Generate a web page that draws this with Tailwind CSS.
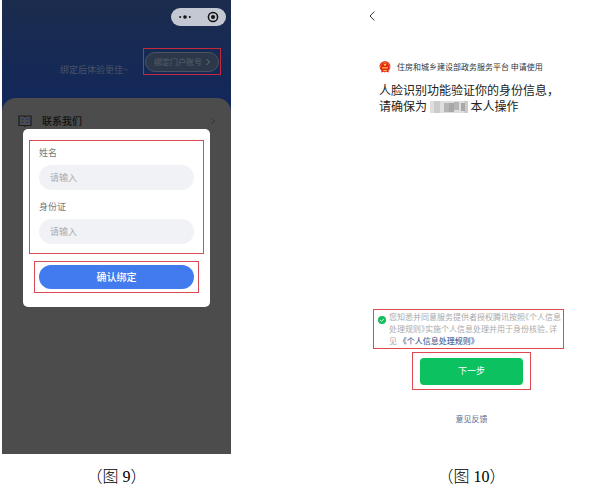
<!DOCTYPE html>
<html lang="zh-CN">
<head>
  <meta charset="UTF-8">
  <meta name="viewport" content="width=device-width, initial-scale=1.0">
  <title>身份绑定与人脸识别</title>
  <script src="https://cdn.jsdelivr.net/npm/@tailwindcss/browser@4"></script>
</head>
<body class="bg-white font-['Noto_Sans_CJK_SC',sans-serif]">
  <main class="grid grid-cols-2 gap-[126px] pl-0.5 pr-[29px]">

    <!-- Bind account -->
    <figure>
      <div class="relative h-[454px] bg-linear-to-b from-[#1b2c4d] to-[#12275c] to-25% flex flex-col">
        <header class="h-[98px] pt-2 flex flex-col">
          <div class="flex justify-end pr-[5px]">
            <div class="w-[55px] h-[18px] rounded-full bg-[#c3c8d3] flex items-center justify-between pl-2 pr-[7px]">
              <svg class="w-3 h-3" viewBox="0 0 12 12" fill="#111">
                <circle cx="1.2" cy="6" r="1"/><circle cx="6" cy="6" r="1.8"/><circle cx="10.8" cy="6" r="1"/>
              </svg>
              <svg class="w-3 h-3" viewBox="0 0 12 12">
                <circle cx="6" cy="6" r="4.6" fill="none" stroke="#111" stroke-width="1.5"/><circle cx="6" cy="6" r="2" fill="#111"/>
              </svg>
            </div>
          </div>
          <div class="mt-[22px] flex justify-between items-start pl-[58px] pr-[10px]">
            <p class="mt-4 text-[9px] leading-3 text-[#4b5364]">绑定后体验更佳~</p>
            <div class="border border-[#c5283d] w-[78px] h-[27px] px-px flex items-center">
              <button type="button" class="w-full h-5 rounded-full border border-[#4a5466] bg-[#2c3849] text-[8px] text-[#59606b] flex items-center justify-center gap-1">
                绑定门户账号
                <svg class="w-1 h-2" viewBox="0 0 4 8" fill="none" stroke="#6a707b"><path d="M.5 1 3.5 4 .5 7"/></svg>
              </button>
            </div>
          </div>
        </header>
        <section class="flex-1 rounded-t-[14px] bg-[#4c4c4c] px-4 pt-4">
          <a href="#" class="flex items-center text-[10px] leading-[14px] font-medium text-[#111]">
            <svg class="w-[14px] h-3 mr-[10px]" viewBox="0 0 14 12" fill="none">
              <path d="M1 1h5l1 .8L8 1h5v9.500H8l-1 .8-1-.8H1z" stroke="#1c1c22" stroke-width="1.2"/>
              <path d="M3 4.200h3M8 4.200h3M3 7.400h3M8 7.400h3" stroke="#26386f" stroke-width="1.3"/>
            </svg>
            联系我们
            <svg class="w-1 h-2 ml-auto" viewBox="0 0 4 8" fill="none" stroke="#333"><path d="M.5 1 3.5 4 .5 7"/></svg>
          </a>
        </section>

        <!-- Dialog -->
        <form class="absolute inset-x-[21px] top-[129px] rounded-[5px] bg-white pt-[11px] pb-[14px] text-[9px] leading-3">
          <div class="border border-[#d94a52] mx-[6px] h-[114px] px-[9px] pt-[6px]">
            <label for="name" class="block text-[#777]">姓名</label>
            <input id="name" type="text" placeholder="请输入" class="block mt-[6px] w-full h-[25px] rounded-full bg-[#f1f2f6] px-[11px] placeholder:text-[#aaabaf]">
            <label for="id-card" class="block mt-[11px] text-[#777]">身份证</label>
            <input id="id-card" type="text" placeholder="请输入" class="block mt-[6px] w-full h-[25px] rounded-full bg-[#f1f2f6] px-[11px] placeholder:text-[#aaabaf]">
          </div>
          <div class="border border-[#d94a52] mx-[11px] mt-[7px] h-8 px-1 flex items-center">
            <button type="submit" class="w-full h-6 rounded-full bg-[#417bee] text-[10px] font-medium text-white">确认绑定</button>
          </div>
        </form>
      </div>
      <figcaption class="pt-[11px] text-center text-[16px] leading-6 font-light text-black font-['Liberation_Serif','Noto_Sans_CJK_SC',serif]">（图 9）</figcaption>
    </figure>

    <!-- Face verification -->
    <figure>
      <div class="h-[454px] pt-[11px] px-[11px] flex flex-col">
        <a href="#" aria-label="返回">
          <svg class="w-[6px] h-[10px] ml-px" viewBox="0 0 6 10" fill="none" stroke="#333"><path d="M5.3.6 1 5l4.3 4.4"/></svg>
        </a>
        <div class="mt-10 ml-[11px] flex items-center gap-[6px] text-[8px] leading-3 text-[#333]">
          <svg class="w-3 h-3" viewBox="0 0 12 12">
            <path d="M6 .3C9 .3 11.400 2.500 11.400 5.500 11.400 7.300 10.700 8.700 9.500 9.700L9.800 11.500 7.300 10.800 6 11.600 4.700 10.800 2.200 11.500 2.500 9.700C1.300 8.700.6 7.300.6 5.500.6 2.500 3 .3 6 .3z" fill="#e3261c"/>
            <path d="M1.500 7A4.600 4.600 0 1 1 10.500 7" fill="none" stroke="#f0832c" stroke-width=".7"/>
            <path d="M6 2l.5 1 1.100.1-.8.8.2 1.100-1-.5-1 .5.200-1.100-.8-.8 1.100-.1zM3 6.200h6v1.200H3zM4.300 9h3.400v1.200H4.300z" fill="#f7c23c"/>
          </svg>
          住房和城乡建设部政务服务平台 申请使用
        </div>
        <h1 class="mt-[9px] ml-[11px] text-[12px] leading-4 text-[#222] whitespace-nowrap">
          人脸识别功能验证你的身份信息，<br>
          请确保为
          <svg class="inline-block w-[38px] h-3 align-[-2px]" viewBox="0 0 38 12">
            <path d="M0 0h38v12H0z" fill="#dedede"/>
            <path d="M4 0h6v12H4zM34 0h4v12h-4z" fill="#cbcbcb"/>
            <path d="M14 2h5v9h-5zM24 1h5v8h-5z" fill="#b5b5b5"/>
            <path d="M19 2h5v9h-5zM31 2h4v8h-4z" fill="#a8a8a8"/>
          </svg>
          本人操作
        </h1>

        <div class="mt-auto mb-[29px] flex flex-col items-center">
          <div class="self-stretch ml-[5px] mr-[11px] h-10 border border-[#e0474f] pl-1 flex gap-[3px] text-[8px] leading-3 text-[#aaa]">
            <span class="relative mt-[6px] size-2 shrink-0">
              <input id="agree" type="checkbox" checked class="block size-2 appearance-none rounded-full bg-[#12bd5b]">
              <svg class="absolute inset-0 pointer-events-none" viewBox="0 0 8 8" fill="none" stroke="#fff" stroke-width=".9"><path d="M2.200 4.100 3.500 5.400 5.900 2.900"/></svg>
            </span>
            <p class="mt-px whitespace-nowrap [font-feature-settings:'halt']">
              <label for="agree">您知悉并同意服务提供者授权腾讯按照《个人信息<br>处理规则》实施个人信息处理并用于身份核验、详<br>见</label>
              <a href="#" class="ml-1 font-medium text-[#576b95]">《个人信息处理规则》</a>
            </p>
          </div>
          <div class="mt-[3px] w-[119px] h-[38px] border border-[#e0474f] px-[7px] flex items-center">
            <button type="button" class="w-full h-[27px] rounded bg-[#0bc160] text-[9px] text-white">下一步</button>
          </div>
          <a href="#" class="mt-[23px] text-[8px] leading-3 text-[#576b95]">意见反馈</a>
        </div>
      </div>
      <figcaption class="pt-[11px] text-center text-[16px] leading-6 font-light text-black font-['Liberation_Serif','Noto_Sans_CJK_SC',serif]">（图 10）</figcaption>
    </figure>
  </main>
</body>
</html>
